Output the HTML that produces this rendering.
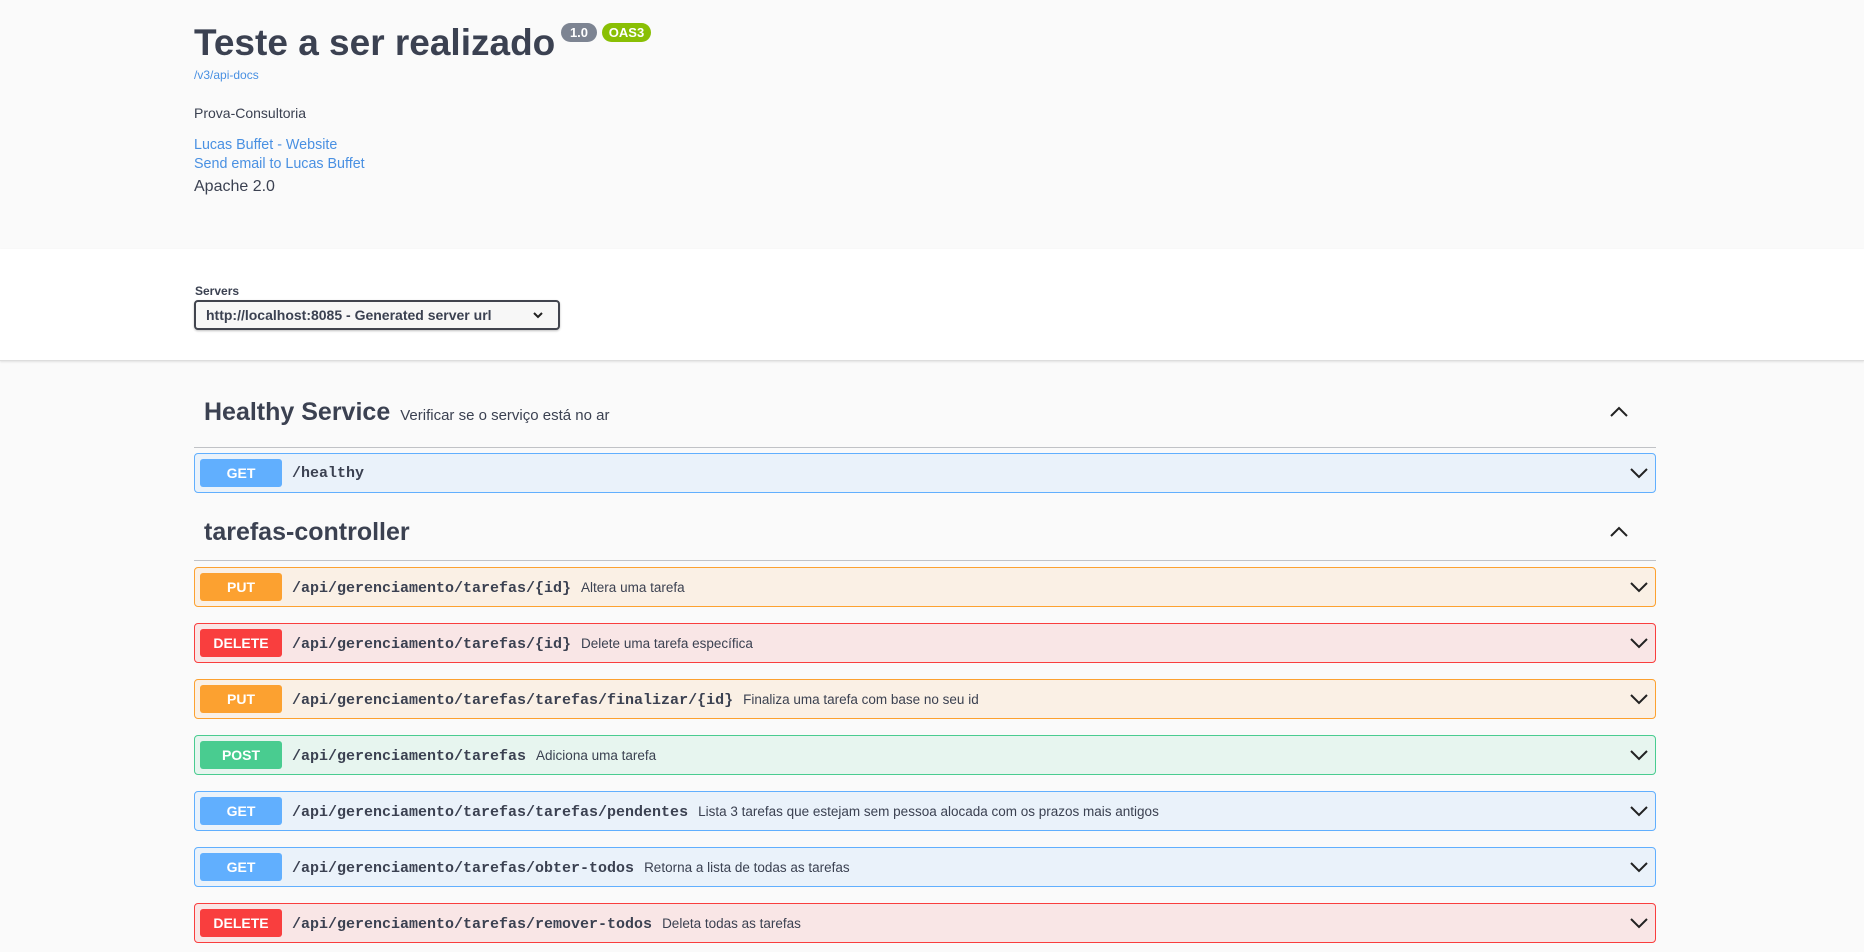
<!DOCTYPE html>
<html><head><meta charset="utf-8">
<style>
*{box-sizing:border-box;margin:0;padding:0}
body{width:1864px;height:952px;overflow:hidden;background:#fafafa;font-family:"Liberation Sans",Arial,sans-serif;color:#3b4151;position:relative}
.info{position:absolute;left:0;top:0;width:1864px;height:249px;background:#fafafa}
.title{position:absolute;left:194px;top:22px;font-size:37px;font-weight:bold;color:#3b4151;white-space:nowrap}
.badge{position:absolute;top:23px;height:19px;border-radius:10px;color:#fff;font-size:13px;font-weight:bold;line-height:19px;text-align:center}
.a{position:absolute;left:194px;color:#4990e2;white-space:nowrap}
.schemes{position:absolute;left:0;top:249px;width:1864px;height:112px;background:#fff;border-bottom:1px solid #ddd;box-shadow:0 1px 2px rgba(0,0,0,.1)}
.sel{position:absolute;left:194px;top:300px;width:366px;height:30px;border:2px solid #41444e;border-radius:4px;background:#f7f7f7;box-shadow:0 1px 2px rgba(0,0,0,.25);font-size:14px;font-weight:bold;padding-left:10px;line-height:26px}
.tag{position:absolute;left:194px;width:1462px;border-bottom:1px solid rgba(59,65,81,.3)}
.tag h4{position:absolute;left:10px;font-size:25px;font-weight:bold;color:#3b4151;white-space:nowrap}
.tag small{font-size:15px;font-weight:normal;margin-left:10px}
.up{position:absolute;right:27px}
.op{position:absolute;left:194px;width:1462px;height:40px;border:1px solid;border-radius:4px}
.m{position:absolute;left:5px;top:5px;width:82px;height:28px;border-radius:3px;color:#fff;font-size:14px;font-weight:bold;text-align:center;line-height:28px}
.p{position:absolute;left:97px;top:1px;line-height:38px;font-family:"Liberation Mono",monospace;font-weight:bold;font-size:15px;color:#3b4151;white-space:nowrap}
.p span{font-family:"Liberation Sans",Arial,sans-serif;font-weight:normal;font-size:13.5px;margin-left:10px}
.dn{position:absolute;right:6px;top:10px}
.get{background:rgba(97,175,254,.1);border-color:#61affe}.get .m{background:#61affe}
.put{background:rgba(252,161,48,.1);border-color:#fca130}.put .m{background:#fca130}
.del{background:rgba(249,62,62,.1);border-color:#f93e3e}.del .m{background:#f93e3e}
.post{background:rgba(73,204,144,.1);border-color:#49cc90}.post .m{background:#49cc90}
</style></head><body>
<div class="info"></div>
<div class="title">Teste a ser realizado</div>
<div class="badge" style="left:561px;width:36px;background:#7d8492">1.0</div>
<div class="badge" style="left:602px;width:49px;background:#89bf04">OAS3</div>
<div class="a" style="top:68px;font-size:12px">/v3/api-docs</div>
<div class="a" style="top:105px;font-size:14px;color:#3b4151">Prova-Consultoria</div>
<div class="a" style="top:137px;font-size:14.3px">Lucas Buffet - Website</div>
<div class="a" style="top:156px;font-size:14.3px">Send email to Lucas Buffet</div>
<div class="a" style="top:178px;font-size:16px;color:#3b4151">Apache 2.0</div>
<div class="schemes"></div>
<div style="position:absolute;left:195px;top:284px;font-size:12px;font-weight:bold">Servers</div>
<div class="sel">http://localhost:8085 - Generated server url
<svg style="position:absolute;left:336px;top:8px" width="12" height="10" viewBox="0 0 12 10"><path d="M2 3l4 4 4-4" fill="none" stroke="#222" stroke-width="2"/></svg></div>

<div class="tag" style="top:385px;height:63px"><h4 style="top:13px">Healthy Service<small>Verificar se o serviço está no ar</small></h4>
<svg class="up" style="top:20px" width="20" height="14" viewBox="0 0 20 14"><path d="M2 11l8-8 8 8" fill="none" stroke="#222" stroke-width="2"/></svg></div>
<div class="op get" style="top:453px"><div class="m">GET</div><div class="p">/healthy</div><svg class="dn" width="20" height="18" viewBox="0 0 20 18"><path d="M2 5l8 8 8-8" fill="none" stroke="#222" stroke-width="2"/></svg></div>

<div class="tag" style="top:505px;height:56px"><h4 style="top:13px">tarefas-controller</h4>
<svg class="up" style="top:20px" width="20" height="14" viewBox="0 0 20 14"><path d="M2 11l8-8 8 8" fill="none" stroke="#222" stroke-width="2"/></svg></div>

<div class="op put" style="top:567px"><div class="m">PUT</div><div class="p">/api/gerenciamento/tarefas/{id}<span>Altera uma tarefa</span></div><svg class="dn" width="20" height="18" viewBox="0 0 20 18"><path d="M2 5l8 8 8-8" fill="none" stroke="#222" stroke-width="2"/></svg></div>
<div class="op del" style="top:623px"><div class="m">DELETE</div><div class="p">/api/gerenciamento/tarefas/{id}<span>Delete uma tarefa específica</span></div><svg class="dn" width="20" height="18" viewBox="0 0 20 18"><path d="M2 5l8 8 8-8" fill="none" stroke="#222" stroke-width="2"/></svg></div>
<div class="op put" style="top:679px"><div class="m">PUT</div><div class="p">/api/gerenciamento/tarefas/tarefas/finalizar/{id}<span>Finaliza uma tarefa com base no seu id</span></div><svg class="dn" width="20" height="18" viewBox="0 0 20 18"><path d="M2 5l8 8 8-8" fill="none" stroke="#222" stroke-width="2"/></svg></div>
<div class="op post" style="top:735px"><div class="m">POST</div><div class="p">/api/gerenciamento/tarefas<span>Adiciona uma tarefa</span></div><svg class="dn" width="20" height="18" viewBox="0 0 20 18"><path d="M2 5l8 8 8-8" fill="none" stroke="#222" stroke-width="2"/></svg></div>
<div class="op get" style="top:791px"><div class="m">GET</div><div class="p">/api/gerenciamento/tarefas/tarefas/pendentes<span>Lista 3 tarefas que estejam sem pessoa alocada com os prazos mais antigos</span></div><svg class="dn" width="20" height="18" viewBox="0 0 20 18"><path d="M2 5l8 8 8-8" fill="none" stroke="#222" stroke-width="2"/></svg></div>
<div class="op get" style="top:847px"><div class="m">GET</div><div class="p">/api/gerenciamento/tarefas/obter-todos<span>Retorna a lista de todas as tarefas</span></div><svg class="dn" width="20" height="18" viewBox="0 0 20 18"><path d="M2 5l8 8 8-8" fill="none" stroke="#222" stroke-width="2"/></svg></div>
<div class="op del" style="top:903px"><div class="m">DELETE</div><div class="p">/api/gerenciamento/tarefas/remover-todos<span>Deleta todas as tarefas</span></div><svg class="dn" width="20" height="18" viewBox="0 0 20 18"><path d="M2 5l8 8 8-8" fill="none" stroke="#222" stroke-width="2"/></svg></div>
</body></html>
